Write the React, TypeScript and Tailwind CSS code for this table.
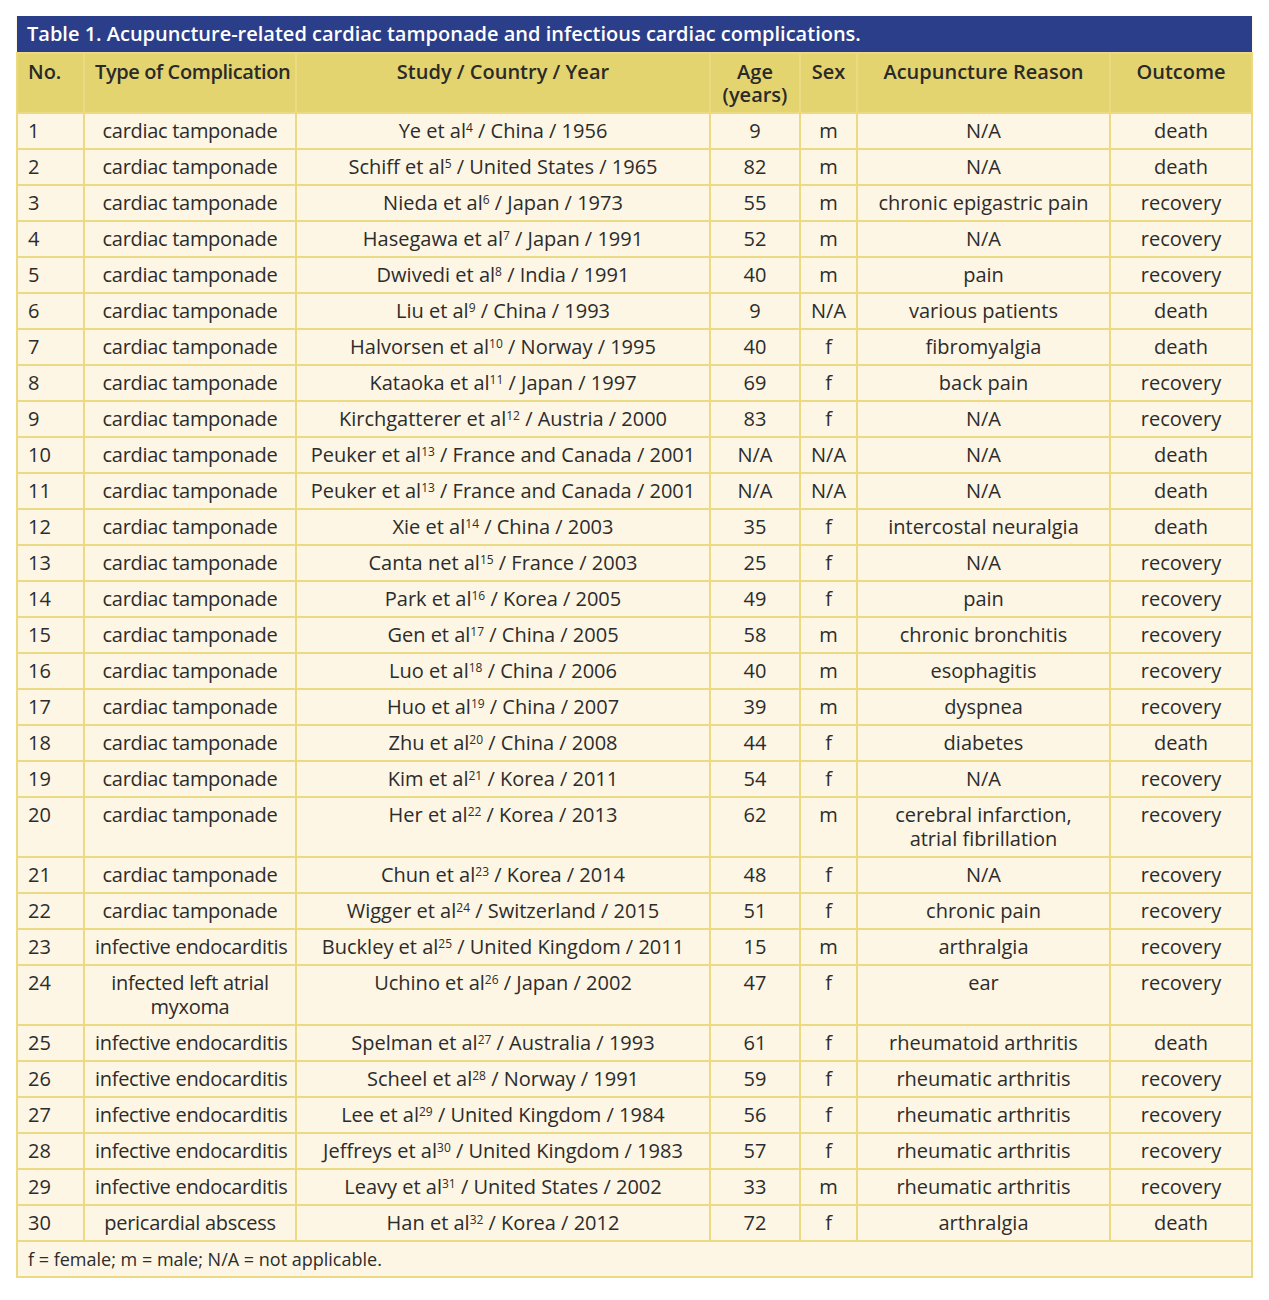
const rows: [string, string, string, string, string, string, string, string][] = [
  ["1", "cardiac tamponade", "Ye et al", "4", " / China / 1956", "9", "m", "N/A|death"],
  ["2", "cardiac tamponade", "Schiff et al", "5", " / United States / 1965", "82", "m", "N/A|death"],
  ["3", "cardiac tamponade", "Nieda et al", "6", " / Japan / 1973", "55", "m", "chronic epigastric pain|recovery"],
  ["4", "cardiac tamponade", "Hasegawa et al", "7", " / Japan / 1991", "52", "m", "N/A|recovery"],
  ["5", "cardiac tamponade", "Dwivedi et al", "8", " / India / 1991", "40", "m", "pain|recovery"],
  ["6", "cardiac tamponade", "Liu et al", "9", " / China / 1993", "9", "N/A", "various patients|death"],
  ["7", "cardiac tamponade", "Halvorsen et al", "10", " / Norway / 1995", "40", "f", "fibromyalgia|death"],
  ["8", "cardiac tamponade", "Kataoka et al", "11", " / Japan / 1997", "69", "f", "back pain|recovery"],
  ["9", "cardiac tamponade", "Kirchgatterer et al", "12", " / Austria / 2000", "83", "f", "N/A|recovery"],
  ["10", "cardiac tamponade", "Peuker et al", "13", " / France and Canada / 2001", "N/A", "N/A", "N/A|death"],
  ["11", "cardiac tamponade", "Peuker et al", "13", " / France and Canada / 2001", "N/A", "N/A", "N/A|death"],
  ["12", "cardiac tamponade", "Xie et al", "14", " / China / 2003", "35", "f", "intercostal neuralgia|death"],
  ["13", "cardiac tamponade", "Canta net al", "15", " / France / 2003", "25", "f", "N/A|recovery"],
  ["14", "cardiac tamponade", "Park et al", "16", " / Korea / 2005", "49", "f", "pain|recovery"],
  ["15", "cardiac tamponade", "Gen et al", "17", " / China / 2005", "58", "m", "chronic bronchitis|recovery"],
  ["16", "cardiac tamponade", "Luo et al", "18", " / China / 2006", "40", "m", "esophagitis|recovery"],
  ["17", "cardiac tamponade", "Huo et al", "19", " / China / 2007", "39", "m", "dyspnea|recovery"],
  ["18", "cardiac tamponade", "Zhu et al", "20", " / China / 2008", "44", "f", "diabetes|death"],
  ["19", "cardiac tamponade", "Kim et al", "21", " / Korea / 2011", "54", "f", "N/A|recovery"],
  ["20", "cardiac tamponade", "Her et al", "22", " / Korea / 2013", "62", "m", "cerebral infarction,\natrial fibrillation|recovery"],
  ["21", "cardiac tamponade", "Chun et al", "23", " / Korea / 2014", "48", "f", "N/A|recovery"],
  ["22", "cardiac tamponade", "Wigger et al", "24", " / Switzerland / 2015", "51", "f", "chronic pain|recovery"],
  ["23", "infective endocarditis", "Buckley et al", "25", " / United Kingdom / 2011", "15", "m", "arthralgia|recovery"],
  ["24", "infected left atrial\nmyxoma", "Uchino et al", "26", " / Japan / 2002", "47", "f", "ear|recovery"],
  ["25", "infective endocarditis", "Spelman et al", "27", " / Australia / 1993", "61", "f", "rheumatoid arthritis|death"],
  ["26", "infective endocarditis", "Scheel et al", "28", " / Norway / 1991", "59", "f", "rheumatic arthritis|recovery"],
  ["27", "infective endocarditis", "Lee et al", "29", " / United Kingdom / 1984", "56", "f", "rheumatic arthritis|recovery"],
  ["28", "infective endocarditis", "Jeffreys et al", "30", " / United Kingdom / 1983", "57", "f", "rheumatic arthritis|recovery"],
  ["29", "infective endocarditis", "Leavy et al", "31", " / United States / 2002", "33", "m", "rheumatic arthritis|recovery"],
  ["30", "pericardial abscess", "Han et al", "32", " / Korea / 2012", "72", "f", "arthralgia|death"],
];

const cell = "border-2 border-[#ecd983] px-[10px] py-[5px] align-top leading-6";
const head = "border-2 border-[#ecd983] px-[10px] pt-[6px] pb-[6px] align-top leading-[23px] font-semibold";

export default function App() {
  return (
    <div className="min-h-screen bg-white pt-[16px] pl-[16px] font-['Open_Sans',sans-serif] text-[#2c2c2c]">
      <table className="w-[1235px] table-fixed border-collapse bg-[#fdf6e4] text-[20px]">
        <colgroup>
          <col className="w-[67px]" />
          <col className="w-[212px]" />
          <col className="w-[414px]" />
          <col className="w-[90px]" />
          <col className="w-[57px]" />
          <col className="w-[253px]" />
          <col className="w-[142px]" />
        </colgroup>
        <thead>
          <tr>
            <th colSpan={7} className="h-[37px] bg-[#2b3e8a] px-[10px] text-left text-[20px] font-semibold leading-6 text-white">
              Table 1. Acupuncture-related cardiac tamponade and infectious cardiac complications.
            </th>
          </tr>
          <tr className="bg-[#e4d46f] text-[#2a2a2a]">
            <th className={`${head} text-left`}>No.</th>
            <th className={`${head} px-[2px] tracking-[-0.4px] whitespace-nowrap`}>Type of Complication</th>
            <th className={head}>Study / Country / Year</th>
            <th className={`${head} px-[2px]`}>
              <div>Age</div>
              <div>(years)</div>
            </th>
            <th className={`${head} px-[2px]`}>Sex</th>
            <th className={head}>Acupuncture Reason</th>
            <th className={head}>Outcome</th>
          </tr>
        </thead>
        <tbody>
          {rows.map((r) => {
            const [reason, outcome] = r[7].split("|");
            return (
              <tr key={r[0]}>
                <td className={`${cell} text-left`}>{r[0]}</td>
                <td className={`${cell} px-[2px] whitespace-pre text-center tracking-[-0.3px]`}>{r[1]}</td>
                <td className={`${cell} px-[4px] whitespace-nowrap text-center`}>
                  {r[2]}
                  <sup className="text-[12px]">{r[3]}</sup>
                  {r[4]}
                </td>
                <td className={`${cell} px-[2px] text-center`}>{r[5]}</td>
                <td className={`${cell} px-[2px] text-center`}>{r[6]}</td>
                <td className={`${cell} px-[4px] whitespace-pre text-center`}>{reason}</td>
                <td className={`${cell} text-center`}>{outcome}</td>
              </tr>
            );
          })}
          <tr>
            <td colSpan={7} className={`${cell} py-[4px] text-left text-[18px]`}>
              f = female; m = male; N/A = not applicable.
            </td>
          </tr>
        </tbody>
      </table>
    </div>
  );
}
